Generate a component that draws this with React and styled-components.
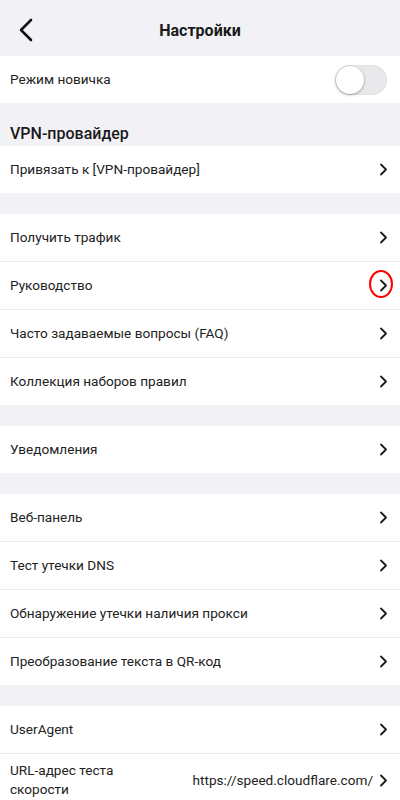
import React from 'react';
import styled, { createGlobalStyle } from 'styled-components';

const GlobalStyle = createGlobalStyle`
  html, body {
    margin: 0;
    padding: 0;
    background: #f2f2f6;
  }
  body {
    font-family: Roboto, "Noto Sans", "Liberation Sans", sans-serif;
    color: #1f1f1f;
  }
`;

const Page = styled.div`
  width: 400px;
  min-height: 800px;
  background: #f2f2f6;
  overflow: hidden;
`;

const Header = styled.div`
  height: 56px;
  display: flex;
  align-items: center;
  justify-content: center;
  position: relative;
`;

const BackButton = styled.div`
  position: absolute;
  left: 17px;
  top: 18px;
  width: 18px;
  height: 24px;
  display: flex;
  align-items: center;
  justify-content: center;
`;

const Title = styled.div`
  font-size: 16px;
  font-weight: 700;
  color: #1a1a1a;
  margin-top: 4px;
`;

const Group = styled.div`
  background: #fff;
  margin-top: ${(p) => p.gap || 0}px;
`;

const SectionLabel = styled.div`
  height: 43px;
  display: flex;
  align-items: flex-end;
  padding: 0 10px 3px;
  box-sizing: border-box;
  font-size: 16px;
  font-weight: 500;
  color: #1a1a1a;
`;

const Row = styled.div`
  height: ${(p) => p.h || 47}px;
  display: flex;
  align-items: center;
  justify-content: space-between;
  padding: 0 12px 0 10px;
  box-sizing: content-box;
  & + & {
    border-top: 1px solid #ececee;
  }
`;

const Label = styled.div`
  font-size: 13.6px;
  line-height: 19px;
  color: #222;
  max-width: ${(p) => (p.narrow ? '150px' : 'none')};
`;

const Right = styled.div`
  display: flex;
  align-items: center;
  gap: 6px;
  position: relative;
`;

const Value = styled.div`
  font-size: 13.6px;
  color: #222;
`;

const ChevronWrap = styled.div`
  width: 9px;
  height: 13px;
  display: flex;
  align-items: center;
  justify-content: center;
  position: relative;
`;

// red annotation ring drawn over the chevron
const Marker = styled.div`
  position: absolute;
  left: -10px;
  top: -9px;
  width: 20px;
  height: 24px;
  border: 2.6px solid #f00;
  border-radius: 50%;
`;

const Toggle = styled.div`
  width: 52px;
  height: 30px;
  border-radius: 15px;
  background: #e9e9eb;
  box-shadow: inset 0 0 0 1px #e2e2e4;
  position: relative;
  margin-right: 1px;
`;

const Knob = styled.div`
  position: absolute;
  left: 1px;
  top: 1px;
  width: 28px;
  height: 28px;
  border-radius: 50%;
  background: #fff;
  box-shadow: 0 1px 3px rgba(0, 0, 0, 0.3), 0 0 0 0.5px rgba(0, 0, 0, 0.08);
`;

const Chevron = () => (
  <svg width="9" height="13" viewBox="0 0 9 13" fill="none">
    <path d="M2 1.5 L7 6.5 L2 11.5" stroke="#1a1a1a" strokeWidth="1.8" strokeLinecap="round" strokeLinejoin="round" />
  </svg>
);

const BackIcon = () => (
  <svg width="16" height="24" viewBox="0 0 16 24" fill="none">
    <path d="M13 2 L3 12 L13 22" stroke="#111" strokeWidth="2.6" strokeLinecap="round" strokeLinejoin="round" />
  </svg>
);

const LinkRow = ({ label, value, marked, narrow, h }) => (
  <Row h={h}>
    <Label narrow={narrow}>{label}</Label>
    <Right>
      {value && <Value>{value}</Value>}
      <ChevronWrap>
        <Chevron />
        {marked && <Marker />}
      </ChevronWrap>
    </Right>
  </Row>
);

const groups = [
  ['Получить трафик', 'Руководство', 'Часто задаваемые вопросы (FAQ)', 'Коллекция наборов правил'],
  ['Уведомления'],
  ['Веб-панель', 'Тест утечки DNS', 'Обнаружение утечки наличия прокси', 'Преобразование текста в QR-код'],
];

export default function App() {
  return (
    <Page>
      <GlobalStyle />
      <Header>
        <BackButton>
          <BackIcon />
        </BackButton>
        <Title>Настройки</Title>
      </Header>

      <Group>
        <Row>
          <Label>Режим новичка</Label>
          <Toggle>
            <Knob />
          </Toggle>
        </Row>
      </Group>

      <SectionLabel>VPN-провайдер</SectionLabel>
      <Group>
        <LinkRow label="Привязать к [VPN-провайдер]" />
      </Group>

      {groups.map((items, i) => (
        <Group key={i} gap={21}>
          {items.map((item) => (
            <LinkRow key={item} label={item} marked={item === 'Руководство'} />
          ))}
        </Group>
      ))}

      <Group gap={21}>
        <LinkRow label="UserAgent" />
        <LinkRow label="URL-адрес теста скорости" value="https://speed.cloudflare.com/" narrow h={52} />
      </Group>
    </Page>
  );
}
